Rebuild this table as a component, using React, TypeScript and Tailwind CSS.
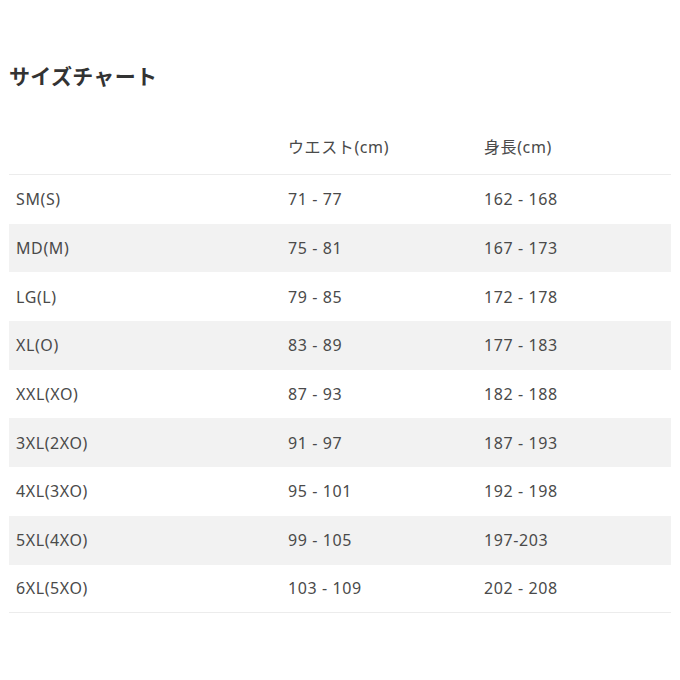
import React from 'react';

const rows = [
  ['SM(S)', '71 - 77', '162 - 168'],
  ['MD(M)', '75 - 81', '167 - 173'],
  ['LG(L)', '79 - 85', '172 - 178'],
  ['XL(O)', '83 - 89', '177 - 183'],
  ['XXL(XO)', '87 - 93', '182 - 188'],
  ['3XL(2XO)', '91 - 97', '187 - 193'],
  ['4XL(3XO)', '95 - 101', '192 - 198'],
  ['5XL(4XO)', '99 - 105', '197-203'],
  ['6XL(5XO)', '103 - 109', '202 - 208'],
];

const App: React.FC = () => {
  return (
    <div className="w-[680px] h-[680px] bg-white font-['Noto_Sans','Noto_Sans_CJK_JP',sans-serif] text-[#4a4a4a]">
      <div className="pl-[9px] pr-[9px] pt-[62px]">
        <h2 className="text-[21px] leading-[28px] font-bold text-[#333] tracking-[0.3px]">サイズチャート</h2>

        <div className="mt-[30px] text-[16px] tracking-[0.6px]">
          {/* header */}
          <div className="grid grid-cols-[272px_196px_1fr] h-[55px] items-center border-b border-[#ececec] pb-[1px]">
            <span className="pl-[7px]"></span>
            <span className="pl-[7px]">ウエスト(cm)</span>
            <span className="pl-[7px]">身長(cm)</span>
          </div>

          {rows.map((r, i) => (
            <div
              key={r[0]}
              className={`grid grid-cols-[272px_196px_1fr] h-[48.7px] items-center ${i % 2 === 1 ? 'bg-[#f2f2f2]' : 'bg-white'} ${i === rows.length - 1 ? 'border-b border-[#ececec]' : ''}`}
            >
              <span className="pl-[7px]">{r[0]}</span>
              <span className="pl-[7px]">{r[1]}</span>
              <span className="pl-[7px]">{r[2]}</span>
            </div>
          ))}
        </div>
      </div>
    </div>
  );
};

export default App;
